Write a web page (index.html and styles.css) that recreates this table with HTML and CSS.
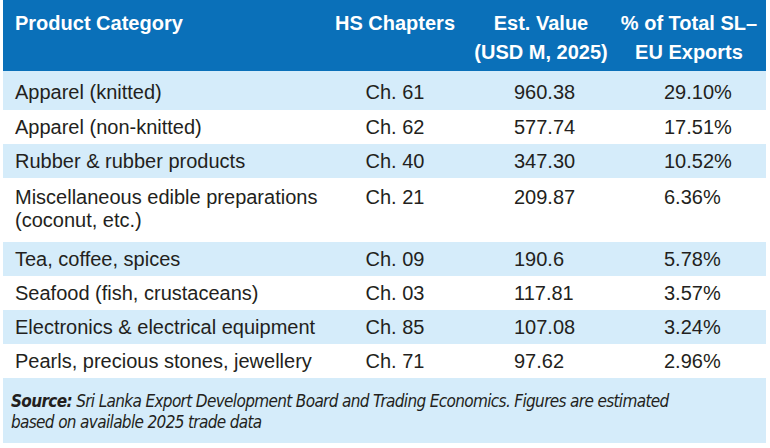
FILE: index.html
```html
<!DOCTYPE html>
<html lang="en">
<head>
<meta charset="utf-8">
<title>SL-EU Exports by Product Category</title>
<link rel="stylesheet" href="styles.css">
</head>
<body>
<table class="trade">
  <colgroup>
    <col class="c-cat">
    <col class="c-hs">
    <col class="c-val">
    <col class="c-pct">
  </colgroup>
  <thead>
    <tr>
      <th class="h-cat">Product Category</th>
      <th class="h-mid">HS Chapters</th>
      <th class="h-mid">Est. Value<br>(USD M, 2025)</th>
      <th class="h-mid">% of Total SL–<br>EU Exports</th>
    </tr>
  </thead>
  <tbody>
    <tr class="alt first"><td class="cat">Apparel (knitted)</td><td class="hs">Ch. 61</td><td class="val">960.38</td><td class="pct">29.10%</td></tr>
    <tr><td class="cat">Apparel (non-knitted)</td><td class="hs">Ch. 62</td><td class="val">577.74</td><td class="pct">17.51%</td></tr>
    <tr class="alt"><td class="cat">Rubber &amp; rubber products</td><td class="hs">Ch. 40</td><td class="val">347.30</td><td class="pct">10.52%</td></tr>
    <tr class="tall"><td class="cat">Miscellaneous edible preparations<br>(coconut, etc.)</td><td class="hs">Ch. 21</td><td class="val">209.87</td><td class="pct">6.36%</td></tr>
    <tr class="alt"><td class="cat">Tea, coffee, spices</td><td class="hs">Ch. 09</td><td class="val">190.6</td><td class="pct">5.78%</td></tr>
    <tr><td class="cat">Seafood (fish, crustaceans)</td><td class="hs">Ch. 03</td><td class="val">117.81</td><td class="pct">3.57%</td></tr>
    <tr class="alt"><td class="cat">Electronics &amp; electrical equipment</td><td class="hs">Ch. 85</td><td class="val">107.08</td><td class="pct">3.24%</td></tr>
    <tr><td class="cat">Pearls, precious stones, jewellery</td><td class="hs">Ch. 71</td><td class="val">97.62</td><td class="pct">2.96%</td></tr>
  </tbody>
  <tfoot>
    <tr>
      <td class="note" colspan="4"><span class="note-label">Source:</span> Sri Lanka Export Development Board and Trading Economics. Figures are estimated<br>based on available 2025 trade data</td>
    </tr>
  </tfoot>
</table>
</body>
</html>
```
FILE: styles.css
```css
html, body {
  margin: 0;
  padding: 0;
  background: #ffffff;
}

body {
  font-family: "Liberation Sans", Arial, sans-serif;
  color: #231f20;
}

.trade {
  border-collapse: collapse;
  border-spacing: 0;
  table-layout: fixed;
  width: 763px;
  margin-left: 3px;
}

.c-cat { width: 317px; }
.c-hs { width: 150px; }
.c-val { width: 142px; }
.c-pct { width: 154px; }

.trade thead tr {
  background: #0a70b9;
  height: 71px;
}

.trade th {
  color: #ffffff;
  font-weight: bold;
  font-size: 20px;
  line-height: 28.5px;
  vertical-align: top;
  padding: 9px 0 0 0;
}

.h-cat {
  text-align: left;
  padding-left: 12px !important;
}

.h-mid {
  text-align: center;
}

.trade tbody tr {
  height: 34px;
  background: #ffffff;
}

.trade tbody tr.alt {
  background: #d5ecfa;
}

.trade tbody tr.first {
  height: 39px;
}

.trade tbody tr.first td {
  padding-top: 4px;
}

.trade tbody tr.tall {
  height: 64px;
}

.trade td {
  font-size: 20px;
  line-height: 23px;
  padding: 0;
  vertical-align: middle;
}

.cat {
  padding-left: 12px !important;
}

.hs {
  text-align: center;
}

.val {
  padding-left: 44px !important;
}

.pct {
  padding-left: 52px !important;
}

.tall td {
  vertical-align: top;
  padding-top: 8px !important;
}

.trade tfoot tr {
  background: #d5ecfa;
  height: 65px;
}

.note {
  font-family: "Liberation Sans Narrow", "DejaVu Sans Condensed", "Liberation Sans", sans-serif;
  font-stretch: condensed;
  font-style: italic;
  font-size: 17px !important;
  line-height: 21px !important;
  letter-spacing: -0.65px;
  padding: 2px 0 0 8px !important;
  color: #231f20;
}

.note-label {
  font-weight: bold;
}
```
